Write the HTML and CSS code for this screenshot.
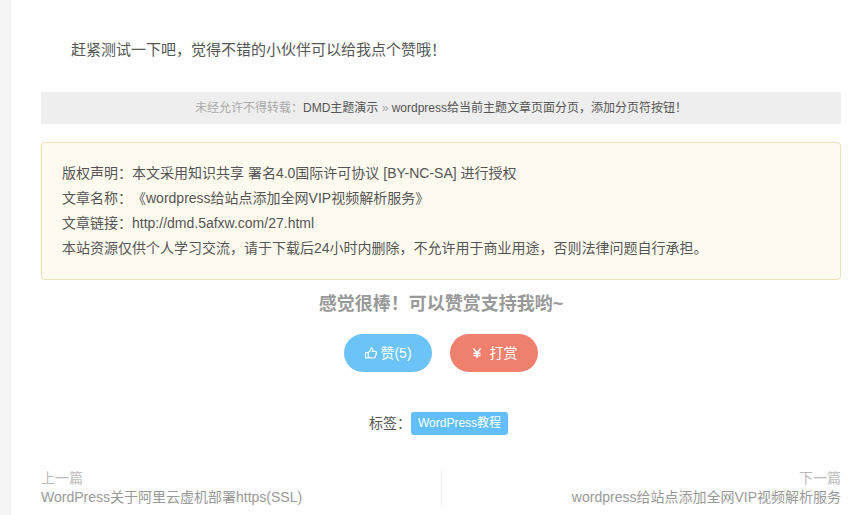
FILE: index.html
```html
<!DOCTYPE html>
<html lang="zh-CN">
<head>
<meta charset="utf-8">
<meta name="viewport" content="width=device-width, initial-scale=1">
<title>wordpress给当前主题文章页面分页，添加分页符按钮！</title>
<link rel="stylesheet" href="styles.css">
</head>
<body>
<main class="content">
  <p class="paragraph">赶紧测试一下吧，觉得不错的小伙伴可以给我点个赞哦！</p>
  <p class="copyright">未经允许不得转载：<a href="#">DMD主题演示</a> » <a href="#">wordpress给当前主题文章页面分页，添加分页符按钮！</a></p>
  <section class="notice">
    <p>版权声明：本文采用知识共享 署名4.0国际许可协议 [BY-NC-SA] 进行授权</p>
    <p>文章名称：《wordpress给站点添加全网VIP视频解析服务》</p>
    <p>文章链接：<a href="#">http://dmd.5afxw.com/27.html</a></p>
    <p>本站资源仅供个人学习交流，请于下载后24小时内删除，不允许用于商业用途，否则法律问题自行承担。</p>
  </section>
  <h3 class="support">感觉很棒！可以赞赏支持我哟~</h3>
  <div class="actions">
    <button class="action like" type="button">
      <svg class="thumb" viewBox="0 0 14 14" aria-hidden="true"><path d="M1.500 6.500h2.700v5.500H1.500zM4.200 6.800C5.800 5.800 6.200 4.700 6.600 3.500L6.900 2C8.500 1.800 9.200 3.200 8.300 5.400H11.300C12.600 5.400 12.700 6.700 12 7.200C12.500 7.900 12.200 8.700 11.700 9C12 9.700 11.600 10.400 11.100 10.600C11.200 11.600 10.700 12 9.900 12H8C6.500 12 5.500 11.500 4.200 11.400"/></svg>
      <span>赞(5)</span>
    </button>
    <button class="action reward" type="button">
      <svg class="yen" viewBox="0 0 14 14" aria-hidden="true"><path d="M3.500 2.500L7 7L10.500 2.500M7 7V12M3.500 7.200H10.500M3.500 9.500H10.500"/></svg>
      <span>打赏</span>
    </button>
  </div>
  <div class="tags">标签：<a class="tag" href="#">WordPress教程</a></div>
  <nav class="pager">
    <div class="prev">上一篇<br><a href="#">WordPress关于阿里云虚机部署https(SSL)</a></div>
    <div class="next">下一篇<br><a href="#">wordpress给站点添加全网VIP视频解析服务</a></div>
  </nav>
</main>
</body>
</html>
```

FILE: styles.css
```css
* {
  box-sizing: border-box;
}

body {
  margin: 0;
  padding-left: 11px;
  background: #f5f5f5;
  color: #555;
  font: 14px/19px "Liberation Sans", "Noto Sans CJK SC", sans-serif;
  text-spacing-trim: space-all;
}

p,
h3 {
  margin: 0;
}

a {
  color: inherit;
  text-decoration: none;
}

.content {
  min-height: 100vh;
  padding: 37px 21px 8px 30px;
  background: #fff;
}

.paragraph {
  margin-bottom: 29px;
  font-size: 15px;
  line-height: 26px;
  text-indent: 2em;
}

.copyright {
  margin-bottom: 18px;
  border-radius: 2px;
  background: #eee;
  color: #aaa;
  font-size: 12px;
  line-height: 32px;
  text-align: center;
}

.copyright a {
  color: #555;
}

.notice {
  padding: 18px 20px;
  border: 1px solid #eee0b5;
  border-radius: 4px;
  background: #fffbf0;
  line-height: 25px;
}

.support {
  margin: 12px 0 18px;
  color: #999;
  font-size: 18px;
  line-height: 24px;
  text-align: center;
}

.actions {
  display: flex;
  justify-content: center;
  gap: 18px;
  margin-bottom: 40px;
}

.action {
  display: flex;
  align-items: center;
  height: 38px;
  padding: 0 20px;
  border: 0;
  border-radius: 19px;
  color: #fff;
  font: inherit;
  cursor: pointer;
}

.like {
  gap: 2px;
  background: #6bc3f8;
}

.reward {
  gap: 6px;
  background: #f0806e;
}

.thumb,
.yen {
  width: 14px;
  height: 14px;
  fill: none;
  stroke: #fff;
  stroke-width: 1.2;
  stroke-linejoin: round;
}

.yen {
  stroke-width: 1.5;
}

.tags {
  display: flex;
  align-items: center;
  justify-content: center;
  margin-bottom: 34px;
}

.tag {
  margin-right: 5px;
  padding: 0 7px;
  border-radius: 3px;
  background: #62bffc;
  color: #fff;
  font-size: 12px;
  line-height: 23px;
}

.pager {
  display: grid;
  grid-template-columns: 1fr 1fr;
  color: #bbb;
}

.pager a {
  color: #999;
}

.next {
  border-left: 1px solid #eee;
  text-align: right;
}
```
